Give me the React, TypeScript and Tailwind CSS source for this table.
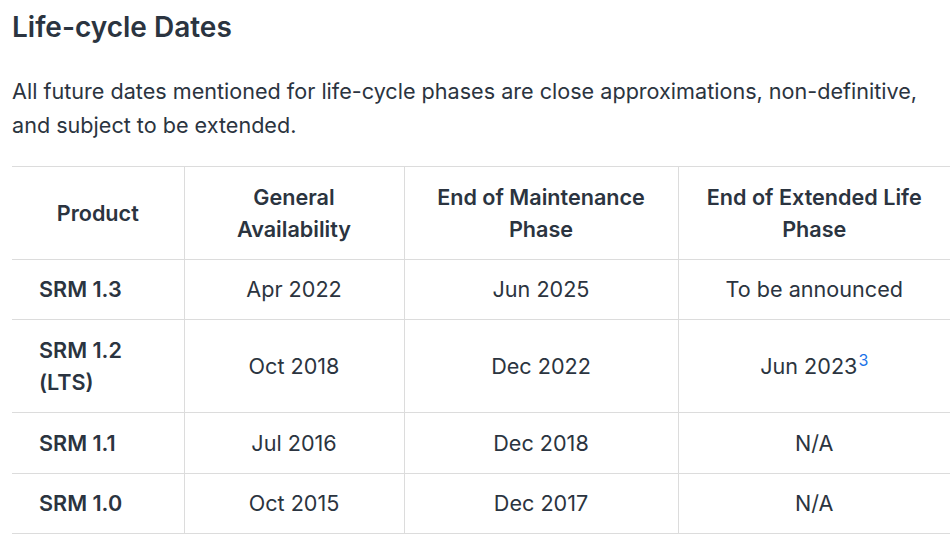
import React from 'react'

const rows = [
  { product: 'SRM 1.3', ga: 'Apr 2022', eom: 'Jun 2025', eol: 'To be announced' },
  { product: 'SRM 1.2 (LTS)', ga: 'Oct 2018', eom: 'Dec 2022', eol: 'Jun 2023', note: '3' },
  { product: 'SRM 1.1', ga: 'Jul 2016', eom: 'Dec 2018', eol: 'N/A' },
  { product: 'SRM 1.0', ga: 'Oct 2015', eom: 'Dec 2017', eol: 'N/A' }
]

const App = () => {
  return (
    <div className="min-h-screen overflow-hidden bg-white pl-3 font-['Inter',sans-serif] text-[#2b3440]">
      <h2 className="pt-[9px] text-[28px] font-semibold leading-[36px]">
        Life-cycle Dates
      </h2>
      <p className="mt-[29px] w-[918px] text-[21.6px] leading-[34px]">
        All future dates mentioned for life-cycle phases are close approximations, non-definitive,
        and subject to be extended.
      </p>
      <table className="mt-[24px] w-[938px] table-fixed border-collapse text-[21.6px] leading-[32.3px]">
        <colgroup>
          <col className="w-[172px]" />
          <col className="w-[220px]" />
          <col className="w-[274px]" />
          <col />
        </colgroup>
        <thead>
          <tr className="border-y border-[#dcdcdc]">
            <th className="px-[27px] py-[13.6px] text-center font-semibold">Product</th>
            <th className="border-l border-[#dcdcdc] px-[27px] py-[13.6px] text-center font-semibold">
              General Availability
            </th>
            <th className="border-l border-[#dcdcdc] px-[27px] py-[13.6px] text-center font-semibold">
              End of Maintenance Phase
            </th>
            <th className="border-l border-[#dcdcdc] px-[27px] py-[13.6px] text-center font-semibold">
              End of Extended Life Phase
            </th>
          </tr>
        </thead>
        <tbody>
          {rows.map((row) => (
            <tr key={row.product} className="border-b border-[#dcdcdc]">
              <td className="px-[27px] py-[13.6px] text-left font-semibold">{row.product}</td>
              <td className="border-l border-[#dcdcdc] px-[27px] py-[13.6px] text-center">{row.ga}</td>
              <td className="border-l border-[#dcdcdc] px-[27px] py-[13.6px] text-center">{row.eom}</td>
              <td className="border-l border-[#dcdcdc] px-[27px] py-[13.6px] text-center">
                {row.eol}
                {row.note && (
                  <sup className="ml-[1px] text-[16px] text-[#1a73e8]">{row.note}</sup>
                )}
              </td>
            </tr>
          ))}
        </tbody>
      </table>
    </div>
  )
}

export default App
